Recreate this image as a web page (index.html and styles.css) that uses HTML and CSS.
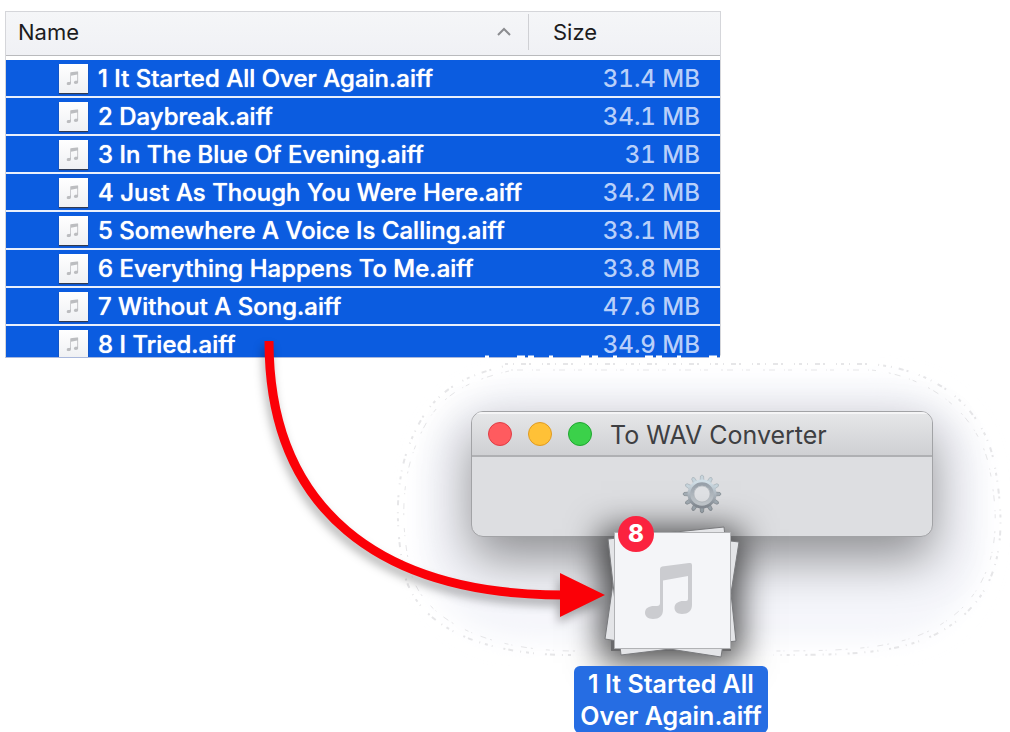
FILE: index.html
```
<!DOCTYPE html>
<html lang="en">
<head>
<meta charset="utf-8">
<meta name="viewport" content="width=device-width, initial-scale=1">
<title>To WAV Converter</title>
<link rel="stylesheet" href="styles.css">
</head>
<body>
<svg class="defs" width="0" height="0" aria-hidden="true">
  <symbol id="note" viewBox="0 0 48 56">
    <path d="M15 6 Q15 4 17 3.500 L44 0 Q47 -.3 47 2 V42 C47 48 43 51 37 51 C32 51 29.500 48 29.500 45 C29.500 40 34 38 38 38 H41 Q43 38 43 36 V13 L18 17.500 V47 C18 53 14 56 8 56 C3 56 0 53 0 50 C0 45 4 43 9 43 H12 Q15 43 15 40 Z"/>
  </symbol>
</svg>
<main class="scene">
  <section class="files">
    <table class="file-table">
      <thead>
        <tr>
          <th class="head-name" scope="col"><button class="sort" type="button">Name
            <svg class="chevron" viewBox="0 0 16 10" aria-hidden="true"><path d="M2 8 8 2l6 6"/></svg></button></th>
          <th class="head-size" scope="col"><button class="sort" type="button">Size</button></th>
        </tr>
      </thead>
      <tbody>
        <tr><td class="name"><span class="file"><svg class="thumb" viewBox="-30 -29 116 116"><use href="#note" width="48" height="56"/></svg>1 It Started All Over Again.aiff</span></td><td class="size">31.4 MB</td></tr>
        <tr><td class="name"><span class="file"><svg class="thumb" viewBox="-30 -29 116 116"><use href="#note" width="48" height="56"/></svg>2 Daybreak.aiff</span></td><td class="size">34.1 MB</td></tr>
        <tr><td class="name"><span class="file"><svg class="thumb" viewBox="-30 -29 116 116"><use href="#note" width="48" height="56"/></svg>3 In The Blue Of Evening.aiff</span></td><td class="size">31 MB</td></tr>
        <tr><td class="name"><span class="file"><svg class="thumb" viewBox="-30 -29 116 116"><use href="#note" width="48" height="56"/></svg>4 Just As Though You Were Here.aiff</span></td><td class="size">34.2 MB</td></tr>
        <tr><td class="name"><span class="file"><svg class="thumb" viewBox="-30 -29 116 116"><use href="#note" width="48" height="56"/></svg>5 Somewhere A Voice Is Calling.aiff</span></td><td class="size">33.1 MB</td></tr>
        <tr><td class="name"><span class="file"><svg class="thumb" viewBox="-30 -29 116 116"><use href="#note" width="48" height="56"/></svg>6 Everything Happens To Me.aiff</span></td><td class="size">33.8 MB</td></tr>
        <tr><td class="name"><span class="file"><svg class="thumb" viewBox="-30 -29 116 116"><use href="#note" width="48" height="56"/></svg>7 Without A Song.aiff</span></td><td class="size">47.6 MB</td></tr>
        <tr><td class="name"><span class="file"><svg class="thumb" viewBox="-30 -29 116 116"><use href="#note" width="48" height="56"/></svg>8 I Tried.aiff</span></td><td class="size">34.9 MB</td></tr>
      </tbody>
    </table>
  </section>

  <svg class="glow" viewBox="0 0 620 312" aria-hidden="true">
    <defs><filter id="soft" x="-10%" y="-20%" width="120%" height="140%"><feGaussianBlur stdDeviation="12"/></filter></defs>
    <rect class="glow-fill" x="30" y="30" width="560" height="256" rx="100" filter="url(#soft)"/>
    <path class="speck" d="M112 10H478C545 16 590 54 601 108C612 166 613 222 572 260C528 300 470 301 380 301"/>
    <path class="speck inner" d="M118 16H478C535 22 584 58 596 112C607 166 607 218 566 257C524 294 470 297 380 297"/>
    <path class="speck" d="M178 301C84 301 25 270 12 222C1 172 2 120 20 82C38 40 66 23 112 12"/>
    <path class="speck inner" d="M182 297C94 297 31 266 18 219C7 172 8 124 25 86C42 44 70 28 116 17"/>
    <path class="speck-white" d="M92 3H345"/>
  </svg>

  <section class="window">
    <header class="titlebar">
      <button class="light red" type="button" aria-label="Close"></button>
      <button class="light amber" type="button" aria-label="Minimize"></button>
      <button class="light green" type="button" aria-label="Zoom"></button>
      <h1 class="title">To WAV Converter</h1>
    </header>
    <div class="drop">
      <svg class="gear" viewBox="-20 -20 40 40" aria-hidden="true">
        <defs>
          <linearGradient id="steel" x1="0" y1="0" x2="0" y2="1"><stop offset="0" stop-color="#d0dee6"/><stop offset=".5" stop-color="#b0b9c1"/><stop offset="1" stop-color="#8a9199"/></linearGradient>
          <linearGradient id="rim" x1="0" y1="0" x2="0" y2="1"><stop offset="0" stop-color="#98a1aa"/><stop offset="1" stop-color="#c6ccd1"/></linearGradient>
          <g id="tooth"><path d="M-2 -13 -1.500 -18Q0 -20 1.500 -18L2 -13Z"/></g>
        </defs>
        <g fill="#c6d4dc" stroke="#9aa4ac" stroke-width=".5">
          <use href="#tooth"/><use href="#tooth" transform="rotate(30)"/><use href="#tooth" transform="rotate(-30)"/><use href="#tooth" transform="rotate(60)"/><use href="#tooth" transform="rotate(-60)"/>
        </g>
        <g fill="#a3adb5" stroke="#71787f" stroke-width=".5">
          <use href="#tooth" transform="rotate(90)"/><use href="#tooth" transform="rotate(-90)"/><use href="#tooth" transform="rotate(120)"/><use href="#tooth" transform="rotate(-120)"/><use href="#tooth" transform="rotate(150)"/><use href="#tooth" transform="rotate(-150)"/><use href="#tooth" transform="rotate(180)"/>
        </g>
        <circle r="11.500" fill="none" stroke="url(#steel)" stroke-width="6"/>
        <circle r="10" fill="none" stroke="url(#rim)" stroke-width="3.500"/>
        <circle r="8" fill="#e0e2e5" stroke="#aab0b6" stroke-width=".6"/>
      </svg>
    </div>
  </section>

  <div class="drag">
    <div class="stack">
      <svg class="sheets" viewBox="0 0 136 134" aria-hidden="true">
        <path class="sheet" d="M18 3 136 17 118 132 2 114Z"/>
        <path class="sheet" d="M5 14 121 2 133 116 18 130Z"/>
        <path class="sheet front" d="M11.500 7.500h116v116h-116z"/>
        <use class="big-note" href="#note" x="42" y="38" width="48" height="56"/>
      </svg>
      <span class="badge">8</span>
    </div>
    <p class="caption">1 It Started All<br>Over Again.aiff</p>
  </div>

  <svg class="arrow" viewBox="0 0 350 290" aria-hidden="true">
    <path class="arrow-line" d="M15 6C15 173 124 260 310 260"/>
    <path class="arrow-head" d="M306 238 351 260 306 282Z"/>
  </svg>
</main>
</body>
</html>
```
FILE: styles.css
```
* { box-sizing: border-box; }
body {
  margin: 0;
  background: #fff;
  font-family: Inter, "Liberation Sans", sans-serif;
  color: #1c1c1e;
}
button { font: inherit; color: inherit; border: 0; padding: 0; background: none; }
.defs { position: absolute; }
.scene {
  position: relative;
  min-height: 100vh;
  padding: 11px 5px;
  overflow: hidden;
}

/* File list, cut by the bottom of its scroll area */
.files {
  max-width: 716px;
  max-height: 347px;
  overflow: hidden;
  border: 1px solid #d5d6da;
  border-bottom-color: #a9b8dc;
}
.file-table { width: 100%; border-collapse: separate; border-spacing: 0; }
.file-table th {
  height: 44px;
  padding: 0 0 3px;
  background: linear-gradient(#f5f6f8, #f0f1f5);
  border-bottom: 1px solid #b9babd;
  font-size: 22px;
  font-weight: 400;
  text-align: left;
}
.sort {
  display: flex;
  align-items: center;
  justify-content: space-between;
  width: 100%;
  height: 36px;
  padding: 0 16px 0 12px;
}
.head-size { width: 192px; }
.head-size .sort { padding-left: 24px; border-left: 1px solid #cfd0d4; }
.chevron { width: 16px; fill: none; stroke: #8b8c90; stroke-width: 2; }
.file-table tbody::before { content: ""; display: block; height: 4px; }
.file-table td {
  height: 38px;
  padding: 2px 0 0;
  background: #0b5ce0;
  border-bottom: 2px solid #eaf0fc;
  font-size: 24px;
  line-height: 34px;
  white-space: nowrap;
}
.file { display: flex; align-items: center; gap: 10px; padding-left: 53px; }
.name { color: #fff; font-weight: 500; text-shadow: 0 0 1px #fff; }
.file-table .size {
  padding-right: 20px;
  color: #b8cffa;
  font-weight: 500;
  font-variant-numeric: tabular-nums;
  text-align: right;
}
.thumb {
  width: 29px;
  height: 29px;
  margin-bottom: 2px;
  background: linear-gradient(#fff, #eff0f3);
  box-shadow: 0 1px 1px #303a50;
  fill: #bcbdc0;
}

/* Converter window */
.glow { position: absolute; left: 393px; top: 354px; width: 620px; }
.glow-fill { fill: #f5f6fb; }
.speck { fill: none; stroke: #e6e6e8; stroke-width: 2; stroke-dasharray: 3 5 1 7 5 3 2 11 1 4; }
.inner { stroke-width: 1; stroke-dasharray: 2 4 6 9 1 3 4 13; }
.speck-white { fill: none; stroke: #fff; stroke-width: 3; stroke-dasharray: 4 28 8 3 6 15; }
.window {
  position: absolute;
  left: 471px;
  top: 411px;
  width: 462px;
  border: 1px solid #a2a3a6;
  border-radius: 12px;
  background: #dddee1;
  box-shadow: 0 22px 50px rgba(0, 0, 0, .42);
  overflow: hidden;
}
.titlebar {
  display: flex;
  align-items: center;
  gap: 16px;
  height: 45px;
  padding: 0 16px;
  background: linear-gradient(#e6e7e9, #cfd0d3);
  border-bottom: 2px solid #afb0b3;
  box-shadow: inset 0 2px 0 #f5f5f6;
}
.light { width: 24px; height: 24px; border: 1px solid; border-radius: 50%; }
.red { background: #ff5b5f; border-color: #df3d45; }
.amber { background: #ffc137; border-color: #e09b22; }
.green { background: #3bd14a; border-color: #1fa630; }
.title { margin: 0; padding: 2px 0 0 2px; color: #3e3f42; font-size: 25px; font-weight: 400; line-height: 32px; white-space: nowrap; }
.drop { display: flex; justify-content: center; height: 79px; padding-top: 17px; }
.gear { width: 40px; height: 40px; }

/* Dragged files */
.drag {
  position: absolute;
  left: 574px;
  top: 525px;
  width: 194px;
}
.stack { position: relative; width: 136px; margin: 0 auto 7px 29px; }
.stack::before {
  content: "";
  position: absolute;
  inset: 12px 8px 8px;
  background: #6b6b6d;
  box-shadow: 0 2px 32px 10px rgba(0, 0, 0, .7);
}
.sheets { position: relative; display: block; width: 136px; overflow: visible; }
.sheet { fill: #e4e5e8; stroke: #797a7d; stroke-width: 1; }
.front { fill: #f4f5f8; stroke: #b1b2b5; }
.big-note { fill: #cbccd0; }
.badge {
  position: absolute;
  left: 15px;
  top: -9px;
  width: 36px;
  height: 36px;
  border-radius: 50%;
  background: #fb233f;
  color: #fff;
  font-size: 24px;
  font-weight: 800;
  line-height: 36px;
  text-align: center;
}
.caption {
  position: relative;
  margin: 0;
  padding: 2px 0 1px;
  border-radius: 6px;
  background: #266de3;
  color: #fff;
  font-size: 25px;
  font-weight: 600;
  line-height: 32px;
  text-align: center;
  white-space: nowrap;
}

/* Arrow from the list to the drop target */
.arrow {
  position: absolute;
  left: 254px;
  top: 335px;
  width: 350px;
  overflow: visible;
  pointer-events: none;
  filter: drop-shadow(-2px 6px 5px rgba(0, 0, 0, .3));
}
.arrow-line { fill: none; stroke: #fb0007; stroke-width: 9; }
.arrow-head { fill: #fb0007; }
```
